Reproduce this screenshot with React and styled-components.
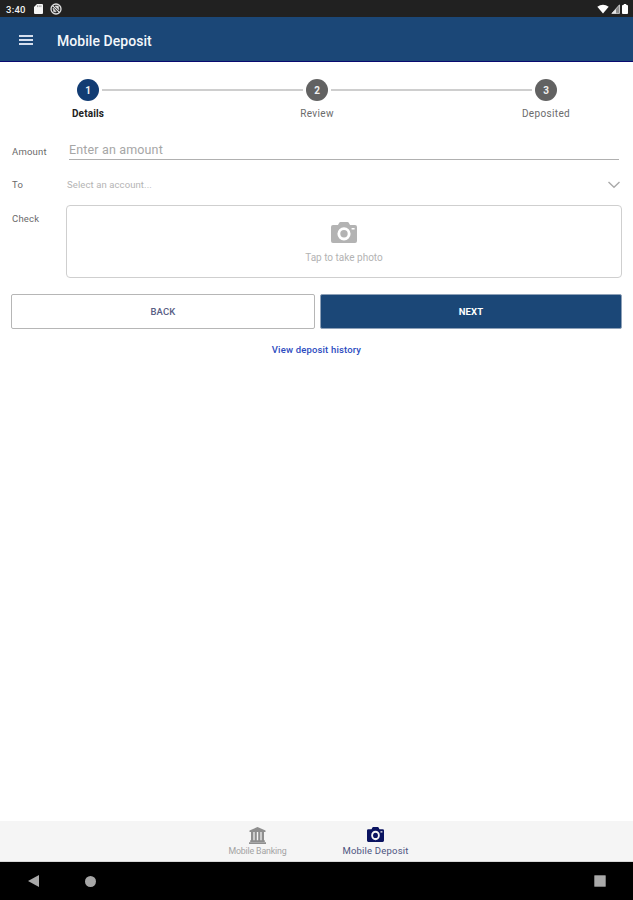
import { Fragment } from 'react'
import styled, { createGlobalStyle } from 'styled-components'

const GlobalStyle = createGlobalStyle`
  * {
    box-sizing: border-box;
  }
  body {
    margin: 0;
    background: #fff;
    font-family: Roboto, 'Liberation Sans', sans-serif;
  }
  button {
    font-family: inherit;
  }
`

const Screen = styled.div`
  display: flex;
  flex-direction: column;
  height: 100vh;
  overflow: hidden;
`

const StatusBar = styled.div`
  display: flex;
  align-items: center;
  height: 17px;
  padding: 1px 5px 0 6px;
  background: #212121;
  color: #f2f2f2;
  font-size: 9.5px;
  font-weight: 500;
  svg {
    display: block;
  }
`

const Clock = styled.span`
  width: 28px;
  letter-spacing: 0.25px;
`

const StatusIcons = styled.div`
  display: flex;
  align-items: center;
  gap: ${(p) => p.$gap};
  margin-left: ${(p) => (p.$end ? 'auto' : '0')};
`

const Header = styled.header`
  display: flex;
  align-items: center;
  height: 45px;
  padding-left: 19px;
  padding-top: 3px;
  background: #1b4777;
  border-bottom: 1px solid #0a0a70;
`

const MenuButton = styled.div`
  display: flex;
  flex-direction: column;
  gap: 2px;
  width: 14px;
  margin: -1px 24px 0 0;
`

const MenuLine = styled.span`
  height: 2px;
  background: #d5deed;
`

const Title = styled.h1`
  margin: 0;
  color: #f4f7fb;
  font-size: 14px;
  font-weight: 500;
  letter-spacing: 0.05px;
`

const Stepper = styled.div`
  display: flex;
  height: 77px;
  padding: 17px 76px 0 77px;
`

const StepItem = styled.div`
  display: flex;
  flex-direction: column;
  align-items: center;
  width: 22px;
`

const StepCircle = styled.div`
  display: flex;
  align-items: center;
  justify-content: center;
  width: 22px;
  height: 22px;
  flex-shrink: 0;
  border-radius: 50%;
  background: ${(p) => (p.$active ? '#123c73' : '#626262')};
  color: #f0f0f0;
  font-size: 10px;
  font-weight: 700;
`

const StepLabel = styled.span`
  margin-top: 6px;
  line-height: 13px;
  white-space: nowrap;
  font-size: 10px;
  letter-spacing: ${(p) => (p.$active ? '0.15px' : '0.35px')};
  font-weight: ${(p) => (p.$active ? 700 : 400)};
  color: ${(p) => (p.$active ? '#222' : '#6b6b6b')};
`

const StepLine = styled.div`
  flex: 1;
  height: 2px;
  margin: 10px 3px 0;
  background: #cecece;
`

const Row = styled.div`
  display: flex;
  height: ${(p) => p.$height};
  padding: 0 11px 0 12px;
`

const Label = styled.label`
  width: 54px;
  flex-shrink: 0;
  padding-top: ${(p) => p.$top};
  line-height: 12px;
  font-size: 9.5px;
  letter-spacing: 0.2px;
  color: #6a6a6a;
`

const AmountField = styled.div`
  flex: 1;
  height: 21px;
  margin: 0 3px;
  border-bottom: 1px solid #b0b0b0;
  line-height: 21px;
  font-size: 12.5px;
  letter-spacing: 0.15px;
  color: #a6a6a6;
`

const AccountSelect = styled.div`
  display: flex;
  align-items: flex-start;
  justify-content: space-between;
  flex: 1;
  padding: 18px 1px 0;
  line-height: 14px;
  font-size: 9.5px;
  letter-spacing: 0.1px;
  color: #b4b4b4;
`

const PhotoBox = styled.div`
  display: flex;
  flex-direction: column;
  align-items: center;
  flex: 1;
  height: 73px;
  padding-top: 16px;
  border: 1px solid #cfcfcf;
  border-radius: 4px;
  color: #b3b3b3;
  font-size: 10px;
  svg {
    display: block;
    margin-bottom: 9px;
  }
`

const Buttons = styled.div`
  display: flex;
  gap: 5px;
  padding: 16px 11px 0;
`

const Button = styled.button`
  flex: ${(p) => (p.$primary ? 302 : 304)} 0 0;
  height: 35px;
  padding: 0;
  border: 1px solid ${(p) => (p.$primary ? '#8ea1b8' : '#b6b6b6')};
  border-radius: 2px;
  background: ${(p) => (p.$primary ? '#1b4777' : '#fff')};
  color: ${(p) => (p.$primary ? '#fff' : '#596085')};
  font-size: 9.5px;
  letter-spacing: 0.15px;
  font-weight: ${(p) => (p.$primary ? 700 : 500)};
`

const HistoryLink = styled.a`
  align-self: center;
  margin-top: 15px;
  line-height: 12px;
  font-size: 9.5px;
  font-weight: 500;
  letter-spacing: 0.16px;
  color: #2d4cc0;
`

const TabBar = styled.nav`
  display: flex;
  justify-content: center;
  height: 41px;
  margin-top: auto;
  background: #f5f5f5;
  border-bottom: 1px solid #d8d8d8;
`

const Tab = styled.div`
  display: flex;
  flex-direction: column;
  align-items: center;
  width: 118px;
  padding-top: 6px;
  font-size: ${(p) => (p.$active ? '9.5px' : '8.8px')};
  line-height: 11px;
  white-space: nowrap;
  letter-spacing: ${(p) => (p.$active ? '0.2px' : '-0.15px')};
  color: ${(p) => (p.$active ? '#4c5480' : '#a3a3a3')};
  svg {
    display: block;
    margin-bottom: ${(p) => (p.$active ? '3px' : '2px')};
    color: ${(p) => (p.$active ? '#0b1460' : '#8e8e8e')};
  }
`

const SystemNav = styled.div`
  display: flex;
  align-items: center;
  height: 38px;
  padding: 0 27px 0 28px;
  background: #000;
  svg {
    display: block;
  }
`

const HomeDot = styled.span`
  width: 11px;
  height: 11px;
  margin-left: 46px;
  border-radius: 50%;
  background: #a6a6a6;
`

const RecentSquare = styled.span`
  width: 12px;
  height: 12px;
  margin-left: auto;
  border: 1px solid #777;
  border-radius: 1px;
  background: #a9a9a9;
`

function CameraIcon({ width, height }) {
  return (
    <svg width={width} height={height} viewBox="0 0 26 21" preserveAspectRatio="none">
      <path
        fill="currentColor"
        fillRule="evenodd"
        d="M2 3h5l1.2-2.2Q8.7 0 9.6 0h6.8q.9 0 1.4.8L19 3h5q2 0 2 2v14q0 2-2 2H2q-2 0-2-2V5q0-2 2-2ZM13 5.2a6.6 6.6 0 1 0 0 13.2 6.6 6.6 0 0 0 0-13.2ZM20.6 6v1.6h3V6Z"
      />
      <circle cx="13" cy="11.8" r="3.7" fill="currentColor" />
    </svg>
  )
}

function BankIcon() {
  return (
    <svg width="17" height="17" viewBox="0 0 17 17" fill="currentColor">
      <path d="M8.5 0 16.5 3.6V5H.5V3.6ZM2 5h2.4v8.5H2ZM5.6 5h2.2v8.5H5.6ZM9.2 5h2.2v8.5H9.2ZM12.6 5H15v8.5h-2.4ZM1.2 13.3h14.6V15H1.2ZM0 15.3h17V17H0Z" />
    </svg>
  )
}

const steps = ['Details', 'Review', 'Deposited']

function App() {
  return (
    <Screen>
      <GlobalStyle />
      <StatusBar>
        <Clock>3:40</Clock>
        <StatusIcons $gap="7px">
          <svg width="9" height="10" viewBox="0 0 9 10">
            <path fill="#f5f5f5" d="M3 0h5q1 0 1 1v8q0 1-1 1H1Q0 10 0 9V3Z" />
            <path stroke="#777" strokeWidth=".7" d="M3.5 1.3v1.8M5.2 1.3v1.8M6.9 1.3v1.8" />
          </svg>
          <svg width="12" height="12" viewBox="0 0 12 12" fill="none" stroke="#e0e0e0">
            <circle cx="6" cy="6" r="5" strokeWidth="1.3" />
            <path strokeWidth="1.3" d="m2.6 2.6 6.8 6.8" />
            <path fill="#e0e0e0" strokeWidth=".6" d="M5 3h3.2L9 6.8ZM3 5l3.2 3.8H3.8Z" />
          </svg>
        </StatusIcons>
        <StatusIcons $gap="2px" $end>
          <svg width="12" height="10" viewBox="0 0 12 10">
            <path fill="#fff" d="M6 9.5.3 2.7Q6-1.4 11.7 2.7Z" />
          </svg>
          <svg width="9" height="10" viewBox="0 0 9 10">
            <path fill="#8d8d8d" stroke="#ddd" strokeWidth=".8" d="M8.5.8v8.6H.8Z" />
            <path fill="#e8e8e8" d="M5 5v4.4H.8Z" />
          </svg>
          <svg width="6" height="10" viewBox="0 0 7 10" preserveAspectRatio="none">
            <path fill="#fff" d="M2 0h3v1h1q1 0 1 1v7q0 1-1 1H1Q0 10 0 9V2q0-1 1-1h1Z" />
          </svg>
        </StatusIcons>
      </StatusBar>
      <Header>
        <MenuButton>
          <MenuLine />
          <MenuLine />
          <MenuLine />
        </MenuButton>
        <Title>Mobile Deposit</Title>
      </Header>
      <Stepper>
        {steps.map((step, i) => (
          <Fragment key={step}>
            {i > 0 && <StepLine />}
            <StepItem>
              <StepCircle $active={i === 0}>{i + 1}</StepCircle>
              <StepLabel $active={i === 0}>{step}</StepLabel>
            </StepItem>
          </Fragment>
        ))}
      </Stepper>
      <Row $height="21px">
        <Label $top="7px">Amount</Label>
        <AmountField>Enter an amount</AmountField>
      </Row>
      <Row $height="45px">
        <Label $top="19px">To</Label>
        <AccountSelect>
          Select an account...
          <svg width="14" height="14" viewBox="0 0 14 14" fill="none" stroke="#aaa" strokeWidth="1.4">
            <path d="m1.5 4 5.5 5.2L12.5 4" />
          </svg>
        </AccountSelect>
      </Row>
      <Row $height="73px">
        <Label $top="8px">Check</Label>
        <PhotoBox>
          <CameraIcon width="26" height="21" />
          Tap to take photo
        </PhotoBox>
      </Row>
      <Buttons>
        <Button>BACK</Button>
        <Button $primary>NEXT</Button>
      </Buttons>
      <HistoryLink>View deposit history</HistoryLink>
      <TabBar>
        <Tab>
          <BankIcon />
          Mobile Banking
        </Tab>
        <Tab $active>
          <CameraIcon width="17" height="15" />
          Mobile Deposit
        </Tab>
      </TabBar>
      <SystemNav>
        <svg width="11" height="12" viewBox="0 0 11 12">
          <path fill="#a9a9a9" d="M11 0v12L0 6Z" />
        </svg>
        <HomeDot />
        <RecentSquare />
      </SystemNav>
    </Screen>
  )
}

export default App
